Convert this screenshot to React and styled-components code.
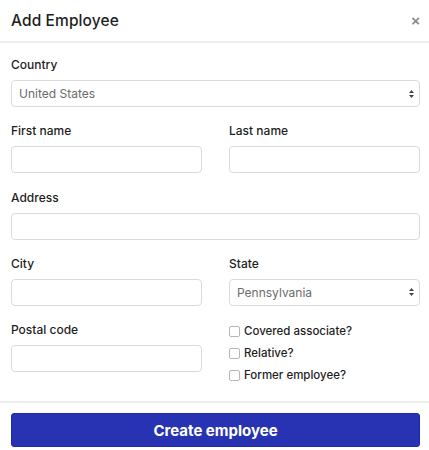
import React from 'react';
import styled, { createGlobalStyle } from 'styled-components';

const GlobalStyle = createGlobalStyle`
  html, body {
    margin: 0;
    padding: 0;
    background: #fff;
  }
  body {
    font-family: Inter, "DejaVu Sans", sans-serif;
    color: #222;
  }
`;

// Modal shell
const Modal = styled.div`
  width: 429px;
  background: #fff;
`;

const Header = styled.div`
  height: 41px;
  display: flex;
  align-items: center;
  justify-content: space-between;
  padding: 0 11px;
  border-bottom: 2px solid #eeeeee;
`;

const Title = styled.h2`
  margin: 0;
  font-size: 15.5px;
  font-weight: 500;
  color: #1e1e1e;
  letter-spacing: 0.1px;
`;

const Close = styled.button`
  border: none;
  background: none;
  padding: 0;
  margin-right: -2px;
  font-size: 15px;
  font-weight: 700;
  line-height: 1;
  color: #8a8a8a;
  cursor: pointer;
`;

const Body = styled.div`
  padding: 14px 9px 19px 11px;
  display: grid;
  grid-template-columns: 191px 191px;
  column-gap: 27px;
  row-gap: 16.25px;
`;

const Field = styled.div`
  display: flex;
  flex-direction: column;
  gap: 7px;
  grid-column: ${(p) => (p.$wide ? '1 / span 2' : 'auto')};
`;

const Label = styled.label`
  font-size: 12px;
  line-height: 16px;
  font-weight: 500;
  color: #1e1e1e;
`;

const Input = styled.input`
  box-sizing: border-box;
  width: 100%;
  height: 27px;
  border: 1px solid #d9dbe0;
  border-radius: 4px;
  background: #fff;
  padding: 0 8px;
  font: inherit;
  font-size: 12px;
  outline: none;
`;

const SelectWrap = styled.div`
  position: relative;
`;

const Select = styled.select`
  box-sizing: border-box;
  width: 100%;
  height: 27px;
  appearance: none;
  border: 1px solid #d9dbe0;
  border-radius: 4px;
  background: #fff;
  padding: 0 7px;
  font-family: inherit;
  font-size: 12px;
  color: #6b6b6b;
  outline: none;
`;

const Arrows = styled.svg`
  position: absolute;
  right: 5px;
  top: 50%;
  transform: translateY(-50%);
  pointer-events: none;
`;

const Checks = styled.div`
  display: flex;
  flex-direction: column;
  gap: 8px;
  margin-top: 2px;
`;

const CheckRow = styled.label`
  display: flex;
  align-items: center;
  gap: 4px;
  font-size: 11.5px;
  line-height: 14px;
  font-weight: 500;
  color: #1e1e1e;
`;

const Box = styled.span`
  box-sizing: border-box;
  width: 11px;
  height: 11px;
  border: 1px solid #b5b7bc;
  border-radius: 2px;
  background: #fff;
`;

const Footer = styled.div`
  border-top: 2px solid #eeeeee;
  padding: 10px 9px 12px 11px;
`;

const Submit = styled.button`
  width: 100%;
  height: 34px;
  border: 1px solid #1f2a9c;
  border-radius: 3px;
  background: #2733b3;
  color: #fff;
  font-family: inherit;
  font-size: 15px;
  font-weight: 700;
  cursor: pointer;
`;

const SelectField = ({ value }) => (
  <SelectWrap>
    <Select defaultValue={value}>
      <option>{value}</option>
    </Select>
    <Arrows width="7" height="11" viewBox="0 0 7 11">
      <path d="M3.5 1.5 L6 4.5 H1 Z" fill="#444" />
      <path d="M3.5 9.5 L6 6.5 H1 Z" fill="#444" />
    </Arrows>
  </SelectWrap>
);

const checks = ['Covered associate?', 'Relative?', 'Former employee?'];

export default function App() {
  return (
    <>
      <GlobalStyle />
      <Modal>
        <Header>
          <Title>Add Employee</Title>
          <Close aria-label="Close">×</Close>
        </Header>
        <Body>
          <Field $wide>
            <Label>Country</Label>
            <SelectField value="United States" />
          </Field>
          <Field>
            <Label>First name</Label>
            <Input />
          </Field>
          <Field>
            <Label>Last name</Label>
            <Input />
          </Field>
          <Field $wide>
            <Label>Address</Label>
            <Input />
          </Field>
          <Field>
            <Label>City</Label>
            <Input />
          </Field>
          <Field>
            <Label>State</Label>
            <SelectField value="Pennsylvania" />
          </Field>
          <Field>
            <Label>Postal code</Label>
            <Input />
          </Field>
          <Checks>
            {checks.map((c) => (
              <CheckRow key={c}>
                <Box />
                {c}
              </CheckRow>
            ))}
          </Checks>
        </Body>
        <Footer>
          <Submit>Create employee</Submit>
        </Footer>
      </Modal>
    </>
  );
}
